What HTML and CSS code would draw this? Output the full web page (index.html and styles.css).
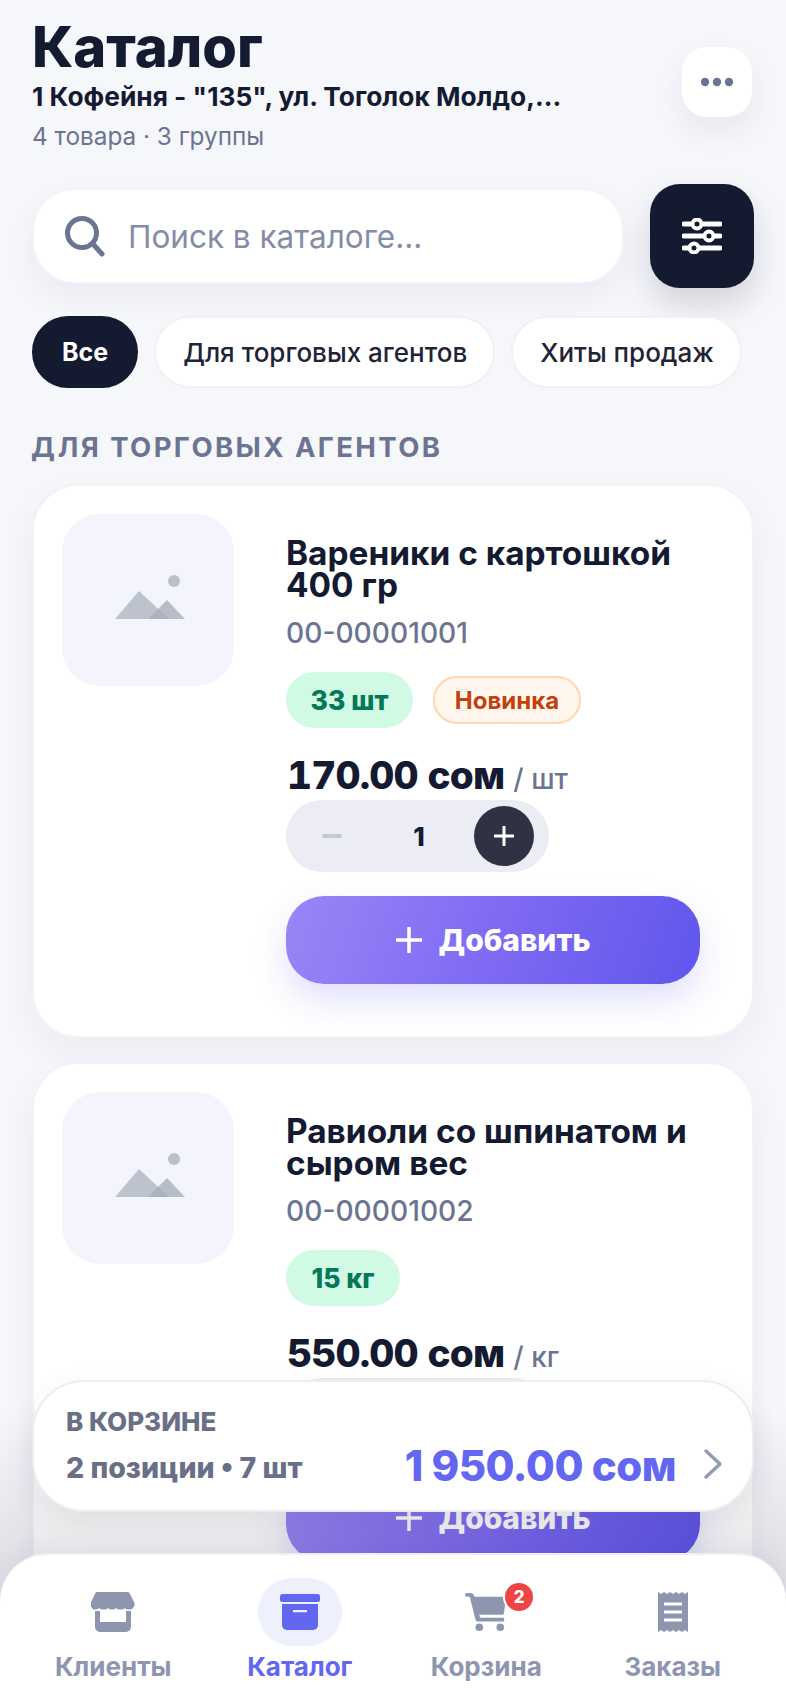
FILE: index.html
```html
<!DOCTYPE html>
<html lang="ru">
<head>
<meta charset="utf-8">
<title>Каталог</title>
<link rel="stylesheet" href="styles.css">
</head>
<body>
<div class="screen">
  <header class="head">
    <div class="head-text">
      <h1 class="title">Каталог</h1>
      <div class="store">1 Кофейня - "135", ул. Тоголок Молдо,...</div>
      <div class="meta">4 товара · 3 группы</div>
    </div>
    <button class="more">
      <svg width="36" height="10" viewBox="0 0 36 10"><circle cx="6" cy="5" r="4.2"/><circle cx="18" cy="5" r="4.2"/><circle cx="30" cy="5" r="4.2"/></svg>
    </button>
  </header>

  <div class="search-row">
    <div class="search">
      <svg class="search-icon" width="40" height="42" viewBox="0 0 40 42"><circle cx="17" cy="18" r="14.5"/><path d="M28 29l9 10"/></svg>
      <span>Поиск в каталоге...</span>
    </div>
    <button class="filter">
      <svg width="40" height="36" viewBox="0 0 40 36"><path d="M2 6h36M2 18h36M2 30h36"/><circle cx="15" cy="6" r="4.5"/><circle cx="27" cy="18" r="4.5"/><circle cx="12" cy="30" r="4.5"/></svg>
    </button>
  </div>

  <nav class="chips">
    <span class="chip chip-on">Все</span>
    <span class="chip">Для торговых агентов</span>
    <span class="chip">Хиты продаж</span>
  </nav>

  <h2 class="section">ДЛЯ ТОРГОВЫХ АГЕНТОВ</h2>

  <article class="card">
    <div class="thumb">
      <svg width="172" height="172" viewBox="0 0 172 172"><circle cx="112" cy="67" r="6" fill="#b9c0cb"/><path d="M53 105l24-28 30 28z" fill="#bcc3ce"/><path d="M86 105l19-19 18 19z" fill="#a7afbc" fill-opacity=".8"/></svg>
    </div>
    <div class="info">
      <h3 class="name">Вареники с картошкой 400 гр</h3>
      <div class="code">00-00001001</div>
      <div class="tags">
        <span class="stock stock-a">33 шт</span>
        <span class="new">Новинка</span>
      </div>
      <div class="price"><b>170.00 сом</b> <span>/ шт</span></div>
      <div class="stepper">
        <span class="minus"></span>
        <span class="qty">1</span>
        <span class="plus"><svg width="20" height="20" viewBox="0 0 20 20"><path d="M10 1v18M1 10h18"/></svg></span>
      </div>
      <button class="add"><svg width="26" height="26" viewBox="0 0 26 26"><path d="M13 1v24M1 13h24"/></svg><span>Добавить</span></button>
    </div>
  </article>

  <article class="card">
    <div class="thumb">
      <svg width="172" height="172" viewBox="0 0 172 172"><circle cx="112" cy="67" r="6" fill="#b9c0cb"/><path d="M53 105l24-28 30 28z" fill="#bcc3ce"/><path d="M86 105l19-19 18 19z" fill="#a7afbc" fill-opacity=".8"/></svg>
    </div>
    <div class="info">
      <h3 class="name">Равиоли со шпинатом и сыром вес</h3>
      <div class="code">00-00001002</div>
      <div class="tags">
        <span class="stock stock-b">15 кг</span>
      </div>
      <div class="price"><b>550.00 сом</b> <span>/ кг</span></div>
      <div class="stepper">
        <span class="minus"></span>
        <span class="qty">1</span>
        <span class="plus"><svg width="20" height="20" viewBox="0 0 20 20"><path d="M10 1v18M1 10h18"/></svg></span>
      </div>
      <button class="add"><svg width="26" height="26" viewBox="0 0 26 26"><path d="M13 1v24M1 13h24"/></svg><span>Добавить</span></button>
    </div>
  </article>

  <div class="dim"></div>

  <div class="cart-bar">
    <div class="cart-left">
      <div class="cart-label">В КОРЗИНЕ</div>
      <div class="cart-count">2 позиции • 7 шт</div>
    </div>
    <div class="cart-total">1 950.00 сом</div>
    <svg class="chev" width="20" height="32" viewBox="0 0 20 32"><path d="M3 3l14 13L3 29"/></svg>
  </div>

  <footer class="tabs">
    <div class="tab">
      <span class="tab-icon">
        <svg width="44" height="40" viewBox="0 0 44 40"><path d="M8 0h28a3 3 0 0 1 3 2l4 8a5 5 0 0 1 -1 6c-2 2 -6 2 -8 0c-2 2 -7 2 -9 0c-2 2 -6 2 -8 0c-2 2 -7 2 -9 0c-2 2 -6 2 -7 0a5 5 0 0 1 -1 -6l4 -8a3 3 0 0 1 4 -2z"/><path fill-rule="evenodd" d="M4 19h5v11h26V19h5v16a5 5 0 0 1 -5 5H9a5 5 0 0 1 -5 -5z"/></svg>
      </span>
      <span class="tab-label">Клиенты</span>
    </div>
    <div class="tab tab-on">
      <span class="tab-icon">
        <svg width="40" height="36" viewBox="0 0 40 36"><rect width="40" height="8" rx="2.5"/><path fill-rule="evenodd" d="M2 10h36v21a5 5 0 0 1 -5 5H7a5 5 0 0 1 -5 -5zM13 16v2.200h14V16z"/></svg>
      </span>
      <span class="tab-label">Каталог</span>
    </div>
    <div class="tab">
      <span class="tab-icon">
        <svg width="42" height="40" viewBox="0 0 44 40"><path d="M2 0h4a3 3 0 0 1 3 2l1 2h33l-2 16a3 3 0 0 1 -3 3H15l1 3h25v4H14a3 3 0 0 1 -3 -2L5 4H2a2 2 0 0 1 0 -4z"/><circle cx="15" cy="36" r="4"/><circle cx="37" cy="36" r="4"/></svg>
        <span class="badge">2</span>
      </span>
      <span class="tab-label">Корзина</span>
    </div>
    <div class="tab">
      <span class="tab-icon">
        <svg width="30" height="40" viewBox="0 0 30 40"><path fill-rule="evenodd" d="M0 0l3 2 3-2 3 2 3-2 3 2 3-2 3 2 3-2 3 2 3-2v40l-3-2-3 2-3-2-3 2-3-2-3 2-3-2-3 2-3-2-3 2zM6 10.500v3h18v-3zM6 18.500v3h18v-3zM6 26.500v3h18v-3z"/></svg>
      </span>
      <span class="tab-label">Заказы</span>
    </div>
  </footer>
</div>
</body>
</html>
```
FILE: styles.css
```css
* { box-sizing: border-box; }
html, body { margin: 0; padding: 0; }
body { font-family: Inter, "Noto Sans", sans-serif; color: #141a30; background: #f6f7fb; }
button { font: inherit; border: 0; padding: 0; }
h1, h2, h3 { margin: 0; }

.screen { position: relative; width: 786px; height: 1704px; overflow: hidden; background: #f6f7fb; }

.head { display: flex; justify-content: space-between; align-items: flex-start; padding: 20px 34px 0 32px; }
.title { font-size: 56px; line-height: 54px; font-weight: 800; }
.store { margin-top: 6px; font-size: 26.300px; line-height: 34px; font-weight: 700; white-space: nowrap; }
.meta { margin-top: 7px; font-size: 24.300px; line-height: 30px; color: #6b7491; }
.more { width: 70px; height: 70px; margin-top: 27px; border-radius: 25px; background: #fff; display: flex; align-items: center; justify-content: center; box-shadow: 0 14px 30px rgba(30, 36, 70, .07); }
.more svg { fill: #6b7491; }

.search-row { display: flex; align-items: center; justify-content: space-between; margin-top: 33px; padding: 0 32px; }
.search { width: 592px; height: 96px; display: flex; align-items: center; gap: 23px; padding-left: 31px; background: #fff; border-radius: 42px; border: 2px solid #f2f3f7; box-shadow: 0 14px 30px rgba(30, 36, 70, .05); font-size: 31.500px; color: #848ca6; }
.search-icon { fill: none; stroke: #6b7491; stroke-width: 5; stroke-linecap: round; }
.filter { width: 104px; height: 104px; border-radius: 30px; background: #141a30; display: flex; align-items: center; justify-content: center; box-shadow: 0 16px 32px rgba(20, 26, 48, .16); }
.filter path { fill: none; stroke: #fff; stroke-width: 5; stroke-linecap: round; }
.filter circle { fill: #141a30; stroke: #fff; stroke-width: 4; }

.chips { display: flex; align-items: center; gap: 16px; margin-top: 28px; padding-left: 32px; }
.chip { height: 72px; display: flex; align-items: center; padding: 0 28px; border-radius: 36px; background: #fff; border: 2px solid #f0f1f5; font-size: 26px; font-weight: 500; color: #1f2436; white-space: nowrap; }
.chip + .chip { padding: 0 26px 0 27px; }
.chip-on { background: #141a30; border-color: #141a30; color: #fff; font-weight: 700; font-size: 25px; }

.section { margin-top: 43px; padding-left: 31px; font-size: 27.500px; line-height: 32px; font-weight: 700; letter-spacing: 2.400px; color: #6b7491; }

.card { display: flex; gap: 52px; width: 722px; margin: 21px 0 24px 32px; padding: 28px 52px 52px 28px; background: #fff; border: 2px solid #f2f3f7; border-radius: 46px; box-shadow: 0 14px 34px rgba(30, 36, 70, .05); }
.thumb { flex: none; width: 172px; height: 172px; border-radius: 38px; background: #f4f5fc; }
.card + .card { margin-top: 0; }
.thumb svg { display: block; }
.info { flex: 1; min-width: 0; padding-top: 23px; }
.name { font-size: 33.400px; line-height: 32px; font-weight: 700; color: #141a30; }
.code { margin-top: 16px; font-size: 28.200px; line-height: 32px; color: #6b7491; font-weight: 500; }
.tags { display: flex; align-items: center; gap: 20px; margin-top: 23px; height: 56px; }
.stock { display: flex; align-items: center; justify-content: center; height: 56px; border-radius: 28px; background: #d1fae5; color: #047857; font-size: 26.500px; font-weight: 800; }
.stock-a { width: 127px; }
.stock-b { width: 114px; }
.new { display: flex; align-items: center; justify-content: center; width: 148px; height: 48px; border-radius: 24px; background: #fff7ed; border: 2px solid #fed7aa; color: #c2410c; font-size: 24px; font-weight: 700; }
.price { display: flex; align-items: baseline; gap: 9px; height: 44px; margin-top: 25px; padding-left: 1px; line-height: 44px; white-space: nowrap; }
.price b { font-size: 38.800px; font-weight: 800; letter-spacing: -.8px; color: #141a30; font-variant-numeric: tabular-nums; }
.price span { font-size: 28px; color: #6b7491; font-weight: 500; }
.stepper { display: flex; align-items: center; justify-content: space-between; width: 263px; height: 72px; margin-top: 3px; padding: 0 15px 0 36px; border-radius: 36px; background: #ecedf4; }
.minus { width: 20px; height: 4px; border-radius: 2px; background: #c6cad5; }
.qty { font-size: 26px; font-weight: 800; color: #141a30; margin-left: 22px; }
.plus { width: 60px; height: 60px; border-radius: 50%; background: #2f3242; display: flex; align-items: center; justify-content: center; }
.plus path { stroke: #fff; stroke-width: 3; stroke-linecap: round; fill: none; }
.add { display: flex; align-items: center; justify-content: center; gap: 17px; width: 414px; height: 88px; margin-top: 24px; border-radius: 38px; background: linear-gradient(110deg, #9a86f6 0%, #7c68f2 55%, #5f56ec 100%); color: #fff; font-size: 30px; font-weight: 800; box-shadow: 0 16px 34px rgba(99, 102, 241, .2); }
.add path { stroke: #fff; stroke-width: 3.500; stroke-linecap: round; fill: none; }

.dim { position: absolute; left: 0; right: 0; bottom: 0; height: 420px; background: linear-gradient(to bottom, rgba(20, 26, 48, 0) 0%, rgba(20, 26, 48, 0) 30%, rgba(20, 26, 48, .12) 75%, rgba(20, 26, 48, .14) 100%); }

.cart-bar { position: absolute; left: 32px; top: 1380px; width: 722px; height: 132px; display: flex; align-items: center; padding: 0 29px 0 32px; background: #fff; border: 2px solid #eceef2; border-radius: 52px; box-shadow: 0 10px 30px rgba(20, 26, 48, .08); }
.cart-left { flex: 1; margin-top: -2px; }
.cart-label { font-size: 26px; line-height: 30px; font-weight: 800; color: #697086; }
.cart-count { margin-top: 16px; font-size: 28.500px; line-height: 30px; font-weight: 800; color: #697086; }
.cart-total { margin-top: 40px; font-size: 42px; line-height: 44px; font-weight: 800; color: #6366f1; white-space: nowrap; letter-spacing: -.5px; }
.chev { margin: 36px 0 0 27px; fill: none; stroke: #949cb0; stroke-width: 3.500; stroke-linecap: round; stroke-linejoin: round; }

.tabs { position: absolute; left: 0; right: 0; bottom: 0; height: 151px; display: grid; grid-template-columns: repeat(4, 1fr); padding: 0 20px; background: #fff; border-radius: 48px 48px 0 0; border-top: 2px solid #eff0f5; box-shadow: 0 -8px 24px rgba(20, 26, 48, .04); }
.tab { display: flex; flex-direction: column; align-items: center; padding-top: 23px; color: #8d96ae; }
.tab-icon { position: relative; display: flex; align-items: center; justify-content: center; width: 84px; height: 68px; border-radius: 34px; }
.tab-icon svg { fill: #8d96ae; }
.tab-label { margin-top: 6px; font-size: 26px; line-height: 30px; font-weight: 700; white-space: nowrap; }
.tab-on { color: #6366f1; }
.tab-on .tab-icon { background: #eef0fe; }
.tab-on .tab-icon svg { fill: #6366f1; }
.badge { position: absolute; left: 59px; top: 3px; width: 32px; height: 32px; border-radius: 50%; background: #ef4444; border: 2px solid #fff; color: #fff; font-size: 17px; font-weight: 800; display: flex; align-items: center; justify-content: center; }
```
